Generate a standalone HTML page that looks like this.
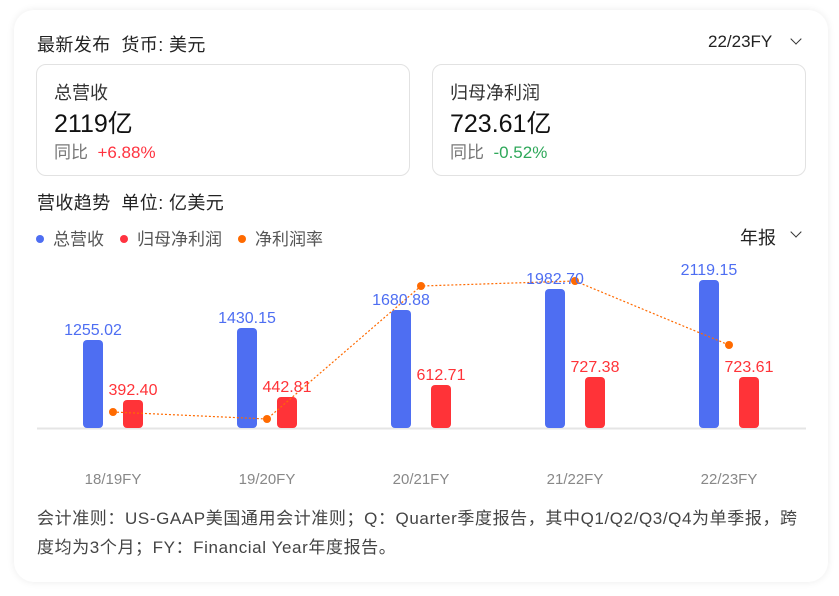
<!DOCTYPE html>
<html><head><meta charset="utf-8"><style>
body{margin:0;background:#fff;font-family:"Liberation Sans","Noto Sans CJK SC",sans-serif;width:839px;height:596px;overflow:hidden;position:relative}
.card{position:absolute;left:14px;top:10px;width:814px;height:572px;border-radius:20px;background:#fff;box-shadow:0 0 8px rgba(0,0,0,.08)}
.a{position:absolute;white-space:nowrap}
.box{position:absolute;top:64px;width:372px;height:110px;border:1px solid #e2e2e2;border-radius:10px}
.chev{position:absolute;width:7px;height:7px;border-right:1.5px solid #333;border-bottom:1.5px solid #333;transform:rotate(45deg)}
.dot{display:inline-block;width:8px;height:8px;border-radius:50%;margin-right:9px;vertical-align:2px}
</style></head><body>
<div class="card"></div>
<div class="a" style="left:37px;top:31px;font-size:18px;color:#222;letter-spacing:0.4px">最新发布&nbsp; 货币: 美元</div>
<div class="a" style="left:708px;top:32px;font-size:17px;color:#222">22/23FY</div>
<div class="chev" style="left:792px;top:35px"></div>
<div class="box" style="left:36px"></div>
<div class="box" style="left:432px"></div>
<div class="a" style="left:54px;top:79px;font-size:18px;color:#333">总营收</div>
<div class="a" style="left:54px;top:104px;font-size:25px;color:#111">2119亿</div>
<div class="a" style="left:54px;top:138px;font-size:17px;color:#777">同比 &nbsp;<span style="color:#ff3340">+6.88%</span></div>
<div class="a" style="left:450px;top:79px;font-size:18px;color:#333">归母净利润</div>
<div class="a" style="left:450px;top:104px;font-size:25px;color:#111">723.61亿</div>
<div class="a" style="left:450px;top:138px;font-size:17px;color:#777">同比 &nbsp;<span style="color:#2fa85a">-0.52%</span></div>
<div class="a" style="left:37px;top:189px;font-size:18px;color:#222;letter-spacing:0.4px">营收趋势&nbsp; 单位: 亿美元</div>
<div class="a" style="left:36px;top:225px;font-size:17px;color:#555"><span class="dot" style="background:#4e6ef2"></span>总营收<span class="dot" style="background:#ff3340;margin-left:16px"></span>归母净利润<span class="dot" style="background:#ff6a00;margin-left:16px"></span>净利润率</div>
<div class="a" style="left:740px;top:224px;font-size:18px;color:#222">年报</div>
<div class="chev" style="left:792px;top:228px"></div>
<svg class="a" style="left:0;top:0" width="839" height="596">
<line x1="37" y1="428.5" x2="806" y2="428.5" stroke="#e5e5e5" stroke-width="2"/>
<g fill="#4e6ef2">
<rect x="83" y="340" width="20" height="88" rx="4"/>
<rect x="237" y="328" width="20" height="100" rx="4"/>
<rect x="391" y="310" width="20" height="118" rx="4"/>
<rect x="545" y="289" width="20" height="139" rx="4"/>
<rect x="699" y="280" width="20" height="148" rx="4"/>
</g>
<g fill="#ff3338">
<rect x="123" y="400" width="20" height="28" rx="4"/>
<rect x="277" y="397" width="20" height="31" rx="4"/>
<rect x="431" y="385" width="20" height="43" rx="4"/>
<rect x="585" y="377" width="20" height="51" rx="4"/>
<rect x="739" y="377" width="20" height="51" rx="4"/>
</g>
<polyline points="113,412 267,419 421,286 575,281 729,345" fill="none" stroke="#ff6a00" stroke-width="1.2" stroke-dasharray="2,2"/>
<g fill="#ff6a00"><circle cx="113" cy="412" r="4"/><circle cx="267" cy="419" r="4"/><circle cx="421" cy="286" r="4"/><circle cx="575" cy="281" r="4"/><circle cx="729" cy="345" r="4"/></g>
<g font-family="Liberation Sans,sans-serif" font-size="16" text-anchor="middle" fill="#4e6ef2">
<text x="93" y="335">1255.02</text><text x="247" y="323">1430.15</text><text x="401" y="305">1680.88</text><text x="555" y="284">1982.70</text><text x="709" y="275">2119.15</text>
</g>
<g font-family="Liberation Sans,sans-serif" font-size="16" text-anchor="middle" fill="#ff3338">
<text x="133" y="395">392.40</text><text x="287" y="392">442.81</text><text x="441" y="380">612.71</text><text x="595" y="372">727.38</text><text x="749" y="372">723.61</text>
</g>
<g font-family="Liberation Sans,sans-serif" font-size="15" text-anchor="middle" fill="#888">
<text x="113" y="484">18/19FY</text><text x="267" y="484">19/20FY</text><text x="421" y="484">20/21FY</text><text x="575" y="484">21/22FY</text><text x="729" y="484">22/23FY</text>
</g>
</svg>
<div class="a" style="left:37px;top:504px;font-size:17px;color:#444;line-height:29px;letter-spacing:0.6px">会计准则：US-GAAP美国通用会计准则；Q：Quarter季度报告，其中Q1/Q2/Q3/Q4为单季报，跨<br>度均为3个月；FY：Financial Year年度报告。</div>
</body></html>
